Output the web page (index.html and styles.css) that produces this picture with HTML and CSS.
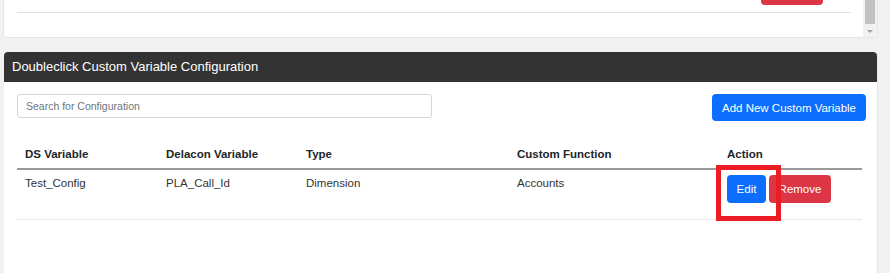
FILE: index.html
```html
<!DOCTYPE html>
<html lang="en">
<head>
  <meta charset="UTF-8">
  <meta name="viewport" content="width=device-width, initial-scale=1.0">
  <title>Doubleclick Custom Variable Configuration</title>
  <link rel="stylesheet" href="styles.css">
</head>
<body>
  <div class="page">
    <!-- bottom of the previous panel, scrolled to its end -->
    <div class="top-panel">
      <div class="top-scroll">
        <div class="top-actions">
          <span class="btn-stub"></span>
        </div>
        <div class="top-rule"></div>
      </div>
      <div class="scrollbar">
        <div class="scroll-thumb"></div>
        <div class="scroll-arrow"></div>
      </div>
    </div>

    <div class="config-card">
      <div class="card-header">Doubleclick Custom Variable Configuration</div>
      <div class="card-body">
        <div class="toolbar">
          <input class="search-input" type="text" placeholder="Search for Configuration">
          <button class="btn btn-primary add-btn">Add New Custom Variable</button>
        </div>

        <table class="config-table">
          <colgroup>
            <col style="width: 141px">
            <col style="width: 140px">
            <col style="width: 211px">
            <col style="width: 210px">
            <col>
          </colgroup>
          <thead>
            <tr>
              <th>DS Variable</th>
              <th>Delacon Variable</th>
              <th>Type</th>
              <th>Custom Function</th>
              <th>Action</th>
            </tr>
          </thead>
          <tbody>
            <tr>
              <td>Test_Config</td>
              <td>PLA_Call_Id</td>
              <td>Dimension</td>
              <td>Accounts</td>
              <td class="action-cell">
                <div class="actions">
                  <button class="btn btn-primary">Edit</button>
                  <button class="btn btn-danger">Remove</button>
                  <span class="highlight"></span>
                </div>
              </td>
            </tr>
          </tbody>
        </table>
      </div>
    </div>
  </div>
</body>
</html>
```

FILE: styles.css
```css
body {
  margin: 0;
  background: #f1f1f1;
  font-family: 'Liberation Sans', Arial, sans-serif;
  color: #333;
}

.page {
  width: 875px;
  padding-left: 3px;
}

/* previous panel */
.top-panel {
  display: flex;
  height: 38px;
  background: #fff;
  border: 1px solid #e6e6e6;
  border-top: none;
  border-radius: 0 0 4px 4px;
  box-sizing: border-box;
  overflow: hidden;
}

.top-scroll {
  flex: 1;
}

.top-actions {
  display: flex;
  justify-content: flex-end;
  padding-right: 40px;
}

.btn-stub {
  width: 62px;
  height: 5px;
  background: #dc3545;
  border-radius: 0 0 4px 4px;
}

.top-rule {
  margin: 7px 12px 0 13px;
  height: 1px;
  background: #e2e2e2;
}

.scrollbar {
  width: 14px;
  background: #f1f1f1;
  display: flex;
  flex-direction: column;
  align-items: center;
}

.scroll-thumb {
  width: 10px;
  height: 24px;
  background: #c1c1c1;
}

.scroll-arrow {
  margin-top: 6px;
  width: 0;
  height: 0;
  border-left: 3px solid transparent;
  border-right: 3px solid transparent;
  border-top: 3px solid #a3a3a3;
}

/* config card */
.config-card {
  margin-top: 14px;
  margin-left: 1px;
  height: 221px;
  background: #fff;
  border-right: 1px solid #e6e6e6;
  border-radius: 4px 4px 0 0;
}

.card-header {
  height: 30px;
  line-height: 30px;
  padding-left: 8px;
  background: #333;
  color: #fff;
  font-size: 13px;
  border-radius: 4px 4px 0 0;
}

.card-body {
  padding: 12px 11px 0 13px;
}

.toolbar {
  display: flex;
  justify-content: space-between;
  align-items: flex-start;
}

.search-input {
  width: 415px;
  height: 24px;
  box-sizing: border-box;
  padding: 0 8px;
  border: 1px solid #d6d6d6;
  border-radius: 3px;
  font-family: inherit;
  font-size: 10.5px;
  color: #333;
}

.search-input::placeholder {
  color: #6c757d;
}

.btn {
  height: 28px;
  padding: 0 10px;
  border: none;
  border-radius: 4px;
  font-family: inherit;
  font-size: 11.5px;
  color: #fff;
  cursor: pointer;
}

.btn-primary {
  background: #0d6efd;
}

.btn-danger {
  background: #dc3545;
}

.add-btn {
  width: 154px;
  height: 27px;
  padding: 0;
}

.config-table {
  margin-top: 19px;
  width: 845px;
  border-collapse: collapse;
  table-layout: fixed;
  font-size: 11.5px;
}

.config-table th {
  text-align: left;
  padding: 7px 8px;
  line-height: 14px;
  color: #212529;
  border-bottom: 2px solid #9a9a9a;
}

.config-table td {
  height: 50px;
  box-sizing: border-box;
  padding: 6px 8px 0;
  line-height: 14px;
  vertical-align: top;
  border-bottom: 1px solid #e8e8e8;
}

.config-table td.action-cell {
  padding-top: 5px;
}

.actions {
  position: relative;
  display: flex;
  gap: 3px;
}

.actions .btn-primary {
  width: 39px;
  padding: 0;
}

.actions .btn-danger {
  width: 62px;
  padding: 0;
}

/* annotation box drawn over the Edit button */
.highlight {
  position: absolute;
  left: -11px;
  top: -10px;
  width: 65px;
  height: 56px;
  box-sizing: border-box;
  border: 5px solid #ec1c24;
}
```
